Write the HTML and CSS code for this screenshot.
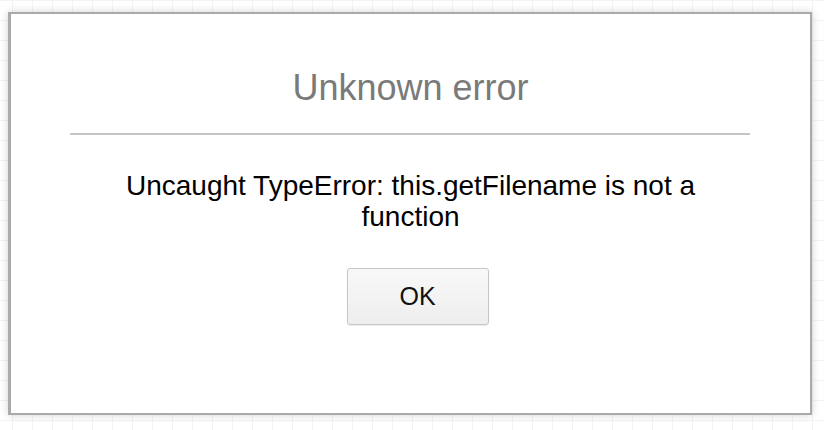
FILE: index.html
```html
<!DOCTYPE html>
<html>
<head>
<meta charset="utf-8">
<link rel="stylesheet" href="styles.css">
</head>
<body>
<div class="dialog">
  <div class="title">Unknown error</div>
  <div class="sep"></div>
  <div class="message">Uncaught TypeError: this.getFilename is not a function</div>
  <div class="actions">
    <button class="btn">OK</button>
  </div>
</div>
</body>
</html>
```
FILE: styles.css
```css
html, body {
  margin: 0;
  padding: 0;
}
body {
  width: 824px;
  height: 430px;
  overflow: hidden;
  background-color: #ffffff;
  background-image:
    linear-gradient(to right, #f3f3f3 1px, transparent 1px),
    linear-gradient(to bottom, #f3f3f3 1px, transparent 1px);
  background-size: 20px 20px;
  background-position: 12px 0;
  font-family: "Liberation Sans", Arial, Helvetica, sans-serif;
  padding-top: 12px;
  padding-left: 8px;
  box-sizing: border-box;
}
.dialog {
  width: 804px;
  height: 403px;
  box-sizing: border-box;
  background: #ffffff;
  border: 2px solid #aaaaaa;
  border-left-width: 3px;
  box-shadow: 0 0 8px rgba(0, 0, 0, 0.18);
  display: flex;
  flex-direction: column;
  align-items: center;
}
.title {
  margin-top: 54px;
  font-size: 36px;
  line-height: 40px;
  color: #7a7a7a;
  text-align: center;
}
.sep {
  margin-top: 25px;
  width: 680px;
  height: 2px;
  background: #c4c4c4;
  margin-left: -2px;
}
.message {
  margin-top: 35px;
  width: 600px;
  font-size: 28px;
  line-height: 31px;
  color: #000000;
  text-align: center;
}
.actions {
  margin-top: 36px;
  display: flex;
  justify-content: center;
}
.btn {
  width: 142px;
  height: 57px;
  box-sizing: border-box;
  border: 1px solid #c6c6c6;
  border-radius: 3px;
  background: linear-gradient(to bottom, #f8f8f8, #eeeeee);
  box-shadow: 0 1px 1px rgba(0, 0, 0, 0.08);
  font-family: "Liberation Sans", Arial, Helvetica, sans-serif;
  font-size: 25px;
  color: #111111;
  padding: 0;
  margin-left: 14px;
}
```
